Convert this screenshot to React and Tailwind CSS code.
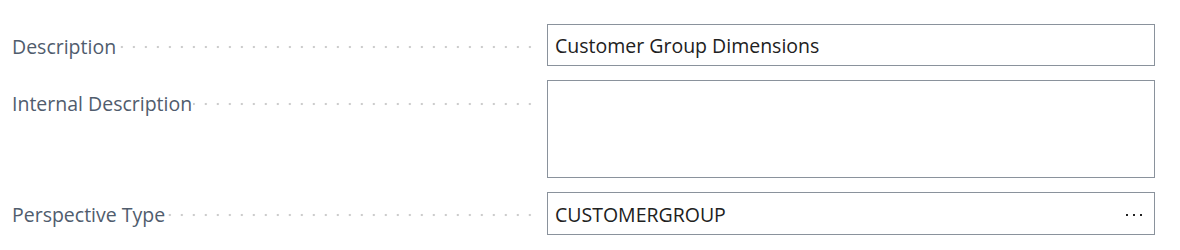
import React from 'react';

const Leader = () => (
  <div className="flex-1 h-[4px] ml-[1px] mr-[-6px] bg-[radial-gradient(circle,#cccccc_1px,transparent_1.6px)] bg-[length:12px_4px] bg-repeat-x bg-[position:right_center]" />
);

const FieldRow = ({ label, children, tall }) => (
  <div className="flex items-start">
    <div className={`w-[518px] flex items-center ${tall ? 'h-[47px]' : 'h-[42px] pt-[3px]'}`}>
      <span className="text-[19.5px] text-[#505c6d] whitespace-nowrap">{label}</span>
      <Leader />
    </div>
    <div className="ml-[17px]">{children}</div>
  </div>
);

export default function App() {
  return (
    <div className="w-[1180px] h-[250px] bg-white pl-[12px] pt-[24px] font-['Open_Sans',sans-serif]">
      <div className="flex flex-col gap-[14px]">
        <FieldRow label="Description">
          <div className="w-[608px] h-[42px] border border-[#8a929c] flex items-center px-[7px] pt-[2px] text-[19.5px] text-[#212121]">
            Customer Group Dimensions
          </div>
        </FieldRow>
        <FieldRow label="Internal Description" tall>
          <div className="w-[608px] h-[98px] border border-[#8a929c]" />
        </FieldRow>
        <FieldRow label="Perspective Type">
          <div className="w-[608px] h-[43px] border border-[#8a929c] flex items-center justify-between pl-[7px] pr-[12px] pt-[2px] text-[19.5px] text-[#212121]">
            <span>CUSTOMERGROUP</span>
            <span className="flex gap-[5px] items-center">
              <span className="w-[2px] h-[2px] bg-[#222]" />
              <span className="w-[2px] h-[2px] bg-[#222]" />
              <span className="w-[2px] h-[2px] bg-[#222]" />
            </span>
          </div>
        </FieldRow>
      </div>
    </div>
  );
}
